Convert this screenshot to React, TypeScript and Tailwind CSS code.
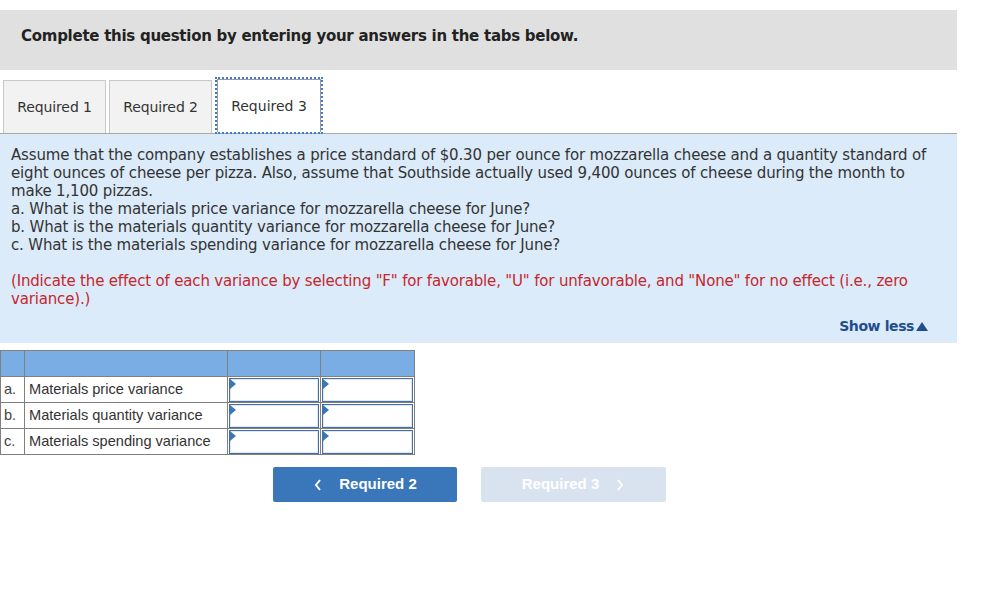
import React from "react";

const V = { fontFamily: '"DejaVu Sans", Verdana, sans-serif' };
const A = { fontFamily: '"Liberation Sans", Arial, sans-serif' };

function Tab({ label, active }: { label: string; active?: boolean }) {
  if (active) {
    return (
      <div className="border-2 border-dotted border-[#3d7cc9] -mb-px">
        <div className="h-[53px] w-[104px] border border-[#9a9a9a] border-b-0 bg-white flex items-center justify-center text-[14px] text-[#333]" style={V}>
          {label}
        </div>
      </div>
    );
  }
  return (
    <div className="h-[53px] w-[103px] border border-[#c8c8c8] border-b-0 bg-[#f2f2f2] flex items-center justify-center text-[14px] tracking-[-0.1px] text-[#333] self-end" style={V}>
      {label}
    </div>
  );
}

function InputCell() {
  return (
    <td className="border border-[#808080] p-0 h-[26px]">
      <div className="relative h-[24px] mx-px border border-[#4a6f9c] bg-white shadow-[inset_0_0_0_1px_#dbe7f5]">
        <div className="absolute left-0 top-0 w-0 h-0 border-t-[5px] border-b-[5px] border-l-[6px] border-t-transparent border-b-transparent border-l-[#3a77ba]" />
      </div>
    </td>
  );
}

export default function App() {
  const rows = [
    ["a.", "Materials price variance"],
    ["b.", "Materials quantity variance"],
    ["c.", "Materials spending variance"],
  ];
  return (
    <div className="w-[995px] h-[610px] bg-white pt-[10px]">
      <div className="w-[957px] h-[60px] bg-[#e0e0e0] pl-[21px] pt-[17px]">
        <span className="block text-[15px] leading-[18px] tracking-[-0.27px] font-bold text-[#222]" style={V}>
          Complete this question by entering your answers in the tabs below.
        </span>
      </div>
      <div className="mt-[7px] flex items-end pl-[3px] gap-[3px] h-[56px]">
        <Tab label="Required 1" />
        <Tab label="Required 2" />
        <Tab label="Required 3" active />
      </div>
      <div className="w-[957px] border-t border-[#a9a9a9] bg-[#dbebf9] pl-[11px] pt-[12px] pb-[8px] text-[15px] leading-[18px] tracking-[-0.17px] text-[#333]" style={V}>
        <p className="whitespace-nowrap">
          Assume that the company establishes a price standard of $0.30 per ounce for mozzarella cheese and a quantity standard of
          <br />
          eight ounces of cheese per pizza. Also, assume that Southside actually used 9,400 ounces of cheese during the month to
          <br />
          make 1,100 pizzas.
        </p>
        <p>a. What is the materials price variance for mozzarella cheese for June?</p>
        <p>b. What is the materials quantity variance for mozzarella cheese for June?</p>
        <p>c. What is the materials spending variance for mozzarella cheese for June?</p>
        <p className="mt-[18px] text-[#c7262d] whitespace-nowrap">
          (Indicate the effect of each variance by selecting "F" for favorable, "U" for unfavorable, and "None" for no effect (i.e., zero
          <br />
          variance).)
        </p>
        <div className="flex justify-end pr-[29px] mt-[9px]">
          <span className="text-[14px] leading-[18px] tracking-[-0.4px] font-bold text-[#1f4e8c] flex items-center">
            Show less
            <span className="ml-[2px] w-0 h-0 border-l-[6px] border-r-[6px] border-b-[9px] border-l-transparent border-r-transparent border-b-[#1f4e8c]" />
          </span>
        </div>
      </div>
      <table className="mt-[7px] border-collapse text-[14.6px] text-[#333]" style={A}>
        <thead>
          <tr className="h-[26px] bg-[#79ade3]">
            <th className="w-[24px] border border-[#808080]" />
            <th className="w-[203px] border border-[#808080]" />
            <th className="w-[93px] border border-[#808080]" />
            <th className="w-[94px] border border-[#808080]" />
          </tr>
        </thead>
        <tbody>
          {rows.map(([l, t]) => (
            <tr key={l}>
              <td className="border border-[#808080] pl-[3px] h-[26px] text-[#444]">{l}</td>
              <td className="border border-[#808080] pl-[4px] whitespace-nowrap">{t}</td>
              <InputCell />
              <InputCell />
            </tr>
          ))}
        </tbody>
      </table>
      <div className="mt-[12px] flex pl-[273px] gap-[24px]" style={A}>
        <div className="w-[184px] h-[35px] rounded-[2px] bg-[#3a77ba] flex items-center justify-center text-white font-bold text-[15px]">
          <svg width="10" height="14" viewBox="0 0 10 14" className="mr-[16px]">
            <path d="M7 2 L3 7 L7 12" stroke="white" strokeWidth="2" fill="none" />
          </svg>
          Required 2
        </div>
        <div className="w-[185px] h-[35px] rounded-[2px] bg-[#d9e3f0] flex items-center justify-center text-white font-bold text-[15px]">
          Required 3
          <svg width="10" height="14" viewBox="0 0 10 14" className="ml-[16px]">
            <path d="M3 2 L7 7 L3 12" stroke="white" strokeWidth="2" fill="none" />
          </svg>
        </div>
      </div>
    </div>
  );
}
